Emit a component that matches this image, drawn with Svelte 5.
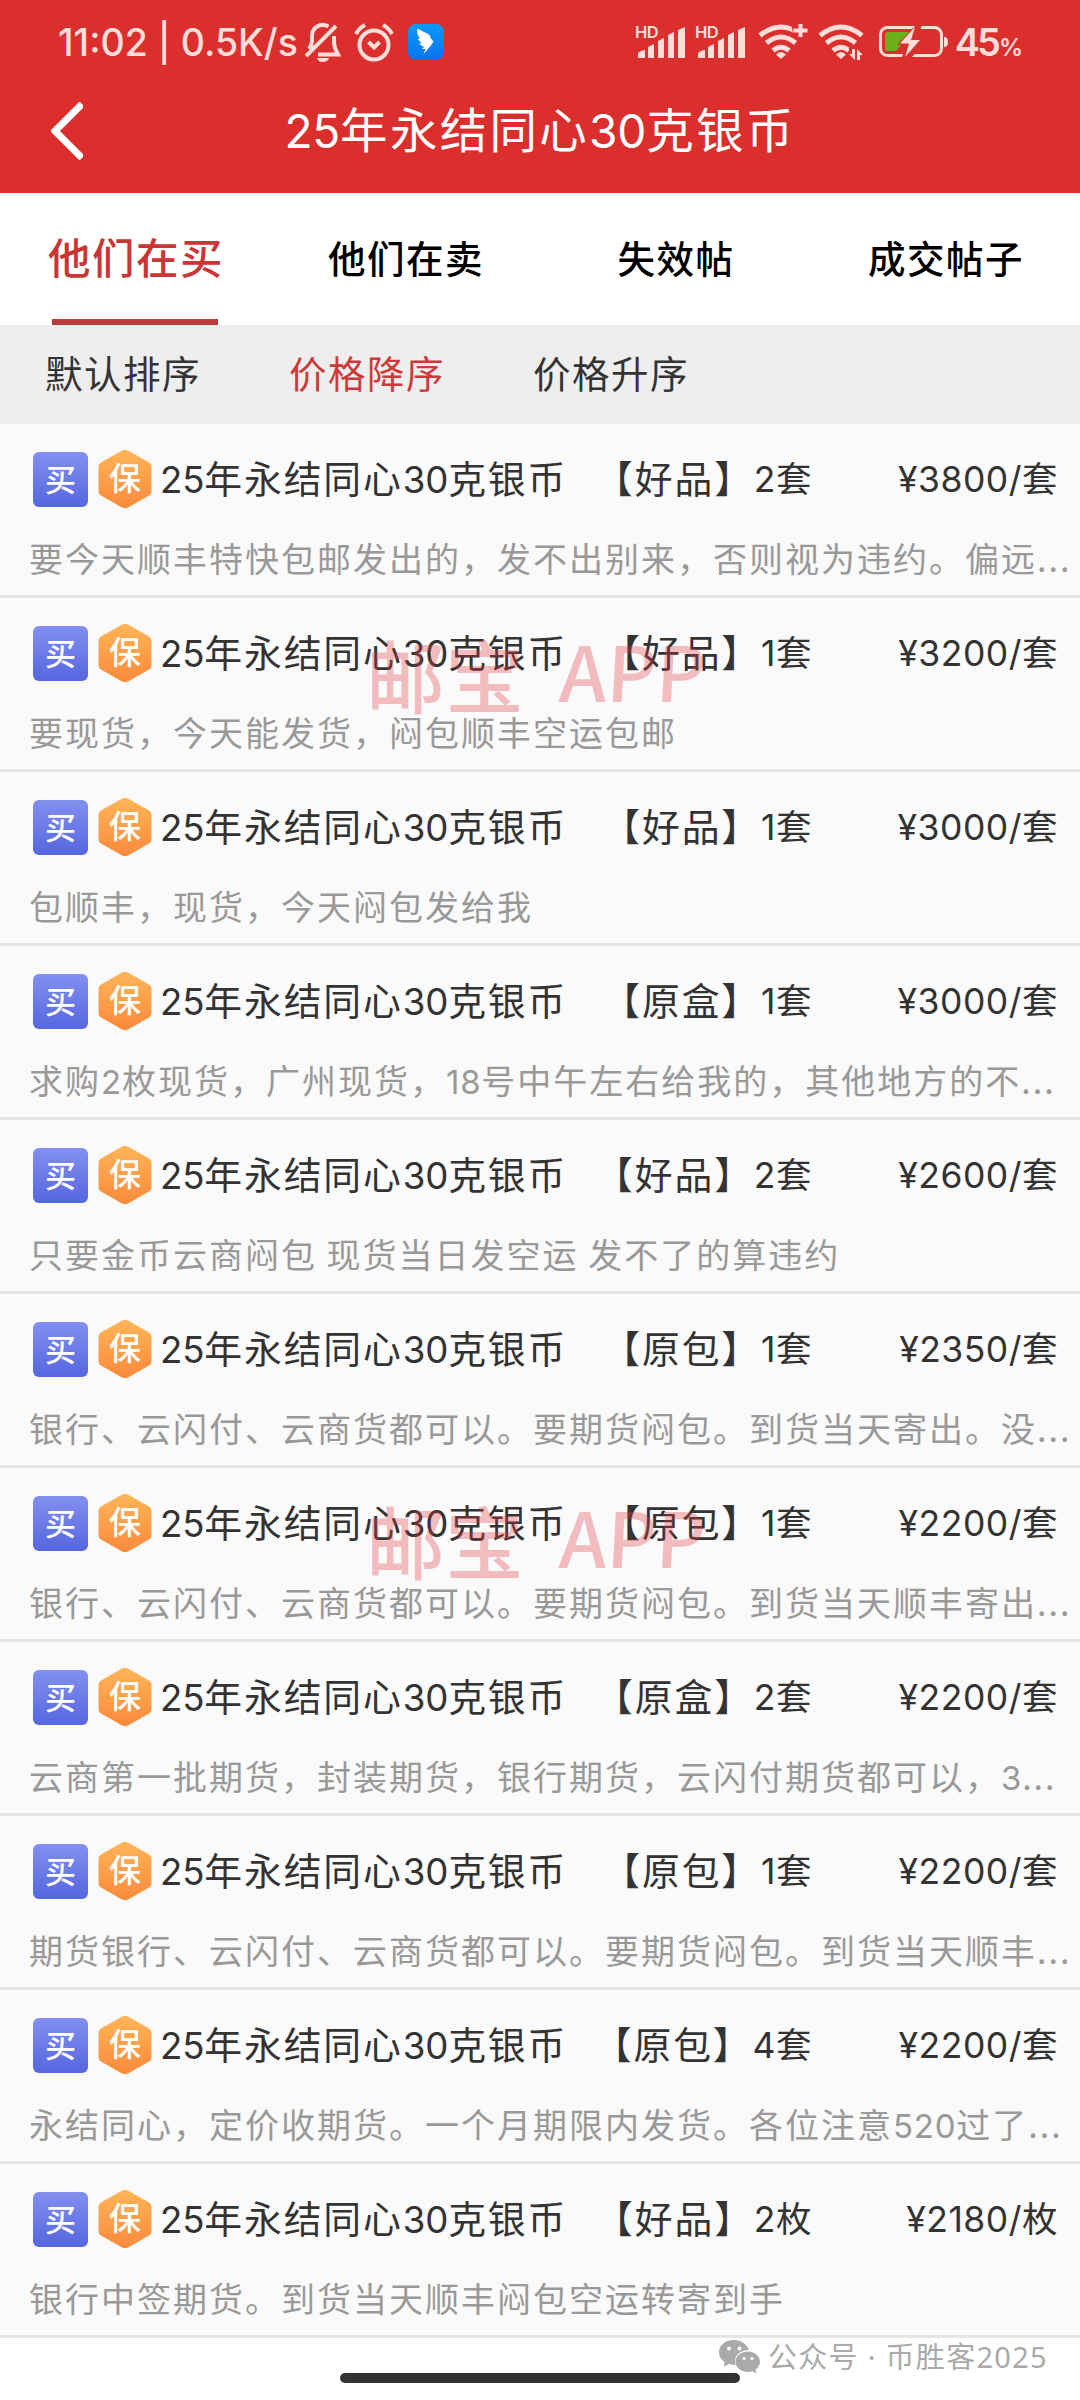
<script lang="ts">
	interface Listing {
		tag: string;
		count: string;
		price: string;
		note: string;
	}

	const title = '25年永结同心30克银币';
	const tabs = ['他们在买', '他们在卖', '失效帖', '成交帖子'];
	const sorts = ['默认排序', '价格降序', '价格升序'];

	let activeTab = $state(0);
	let activeSort = $state(1);

	const listings: Listing[] = [
		{ tag: '好品', count: '2套', price: '3800/套', note: '要今天顺丰特快包邮发出的，发不出别来，否则视为违约。偏远...' },
		{ tag: '好品', count: '1套', price: '3200/套', note: '要现货，今天能发货，闷包顺丰空运包邮' },
		{ tag: '好品', count: '1套', price: '3000/套', note: '包顺丰，现货，今天闷包发给我' },
		{ tag: '原盒', count: '1套', price: '3000/套', note: '求购2枚现货，广州现货，18号中午左右给我的，其他地方的不...' },
		{ tag: '好品', count: '2套', price: '2600/套', note: '只要金币云商闷包 现货当日发空运 发不了的算违约' },
		{ tag: '原包', count: '1套', price: '2350/套', note: '银行、云闪付、云商货都可以。要期货闷包。到货当天寄出。没...' },
		{ tag: '原包', count: '1套', price: '2200/套', note: '银行、云闪付、云商货都可以。要期货闷包。到货当天顺丰寄出...' },
		{ tag: '原盒', count: '2套', price: '2200/套', note: '云商第一批期货，封装期货，银行期货，云闪付期货都可以，3...' },
		{ tag: '原包', count: '1套', price: '2200/套', note: '期货银行、云闪付、云商货都可以。要期货闷包。到货当天顺丰...' },
		{ tag: '原包', count: '4套', price: '2200/套', note: '永结同心，定价收期货。一个月期限内发货。各位注意520过了...' },
		{ tag: '好品', count: '2枚', price: '2180/枚', note: '银行中签期货。到货当天顺丰闷包空运转寄到手' }
	];

	/** Split text into runs of digits and everything else. */
	function runs(text: string): string[] {
		return text.split(/(\d+)/).filter(Boolean);
	}
</script>

{#snippet mixed(text: string)}
	{#each runs(text) as run}<span class:num={/^\d/.test(run)}>{run}</span>{/each}
{/snippet}

{#snippet signal()}
	<svg class="signal" width="52" height="38" viewBox="0 0 52 38">
		<text x="0" y="15" class="hd">HD</text>
		<path d="M3 35v-5q3-3 7-3v8zM13 35V24l6-3v14zM23 35V18l6-3v20zM33 35V12l6-3v26zM43 35V7l7-3v31z" />
	</svg>
{/snippet}

{#snippet waves()}
	<g fill="none" stroke="currentColor" stroke-width="5">
		<path d="M2 12.500Q23-4.500 44 12.500" />
		<path d="M8.500 20Q23 8 37.500 20" />
		<path d="M15 27.500Q23 21 31 27.500" />
	</g>
	<path d="M23 36l-5-4.500q5-5 10 0z" />
{/snippet}

<div class="screen">
	<header>
		<div class="status">
			<span class="clock">11:02 | 0.5K/s</span>
			<svg class="bell" width="36" height="40" viewBox="0 0 36 40" fill="none" stroke="currentColor" stroke-width="4">
				<path d="M1 34 31 4M23.500 4.500C15 0 7 6 7 14v5q0 4-3 8M29 14v6q0 5 4 12.500H13" />
				<path d="M12 36h12q-1 4-6 4t-6-4z" fill="currentColor" stroke="none" />
			</svg>
			<svg class="alarm" width="40" height="40" viewBox="0 0 40 40" fill="none" stroke="currentColor" stroke-width="4">
				<circle cx="20" cy="23" r="14.500" />
				<path d="M2 12Q5 6 11 3M29 3q6 3 9 9M14.500 20l5.500 5.500 5.500-5.500" />
			</svg>
			<svg class="wing" width="36" height="36" viewBox="0 0 36 36">
				<defs>
					<linearGradient id="wing-fill" x1="0" y1="0" x2="0" y2="1">
						<stop offset="0" stop-color="#0b9af8" />
						<stop offset="1" stop-color="#0a74ee" />
					</linearGradient>
				</defs>
				<rect width="36" height="36" rx="8" fill="url(#wing-fill)" />
				<path d="M9.500 4.500 19 9.500q4 2 3.500 4.500l3 3.500-3 4.500-7 8 2-5H14l2-2-5-3 2.500-1-4-4 2.500-.5q-4-5-2.500-10z" fill="#fff" />
			</svg>
			<div class="right">
				{@render signal()}
				{@render signal()}
				<svg class="wifi" width="51" height="38" viewBox="0 0 51 38">
					{@render waves()}
					<path class="cut" d="M33 0h18v15H36z" />
					<path d="M40.500 1h4v4.500h5v4h-5V14h-4V9.500h-5v-4h5z" />
				</svg>
				<svg class="wifi second" width="48" height="38" viewBox="0 0 48 38">
					{@render waves()}
					<path class="cut" d="M31 25h16v13H31z" />
					<path d="M37 26v11l-6-6h3v-5zM39 37V26l6 6h-3v5z" />
				</svg>
				<svg class="battery" width="70" height="34" viewBox="0 0 70 34">
					<rect x="1.500" y="2.500" width="61" height="28" rx="7" fill="none" stroke="currentColor" stroke-width="3" />
					<path d="M9 7h24L17 26H9q-3 0-3-3V10q0-3 3-3z" fill="#6bb01c" />
					<path d="M37 0 18 20h10l-6 14h9l19-20H38l5-14z" class="cut" />
					<path d="M36 2 21 18.500h9L26 32l15-17h-9z" />
					<path d="M65 12q4 0 4 5t-4 5z" />
				</svg>
				<span class="level">45<small>%</small></span>
			</div>
		</div>
		<div class="nav">
			<button class="back" type="button" aria-label="返回">
				<svg width="32" height="58" viewBox="0 0 32 58" fill="none" stroke="currentColor" stroke-width="7">
					<path d="M31 2 4 29l27 27" />
				</svg>
			</button>
			<h1>{@render mixed(title)}</h1>
		</div>
	</header>

	<nav class="tabs">
		{#each tabs as tab, i}
			<button type="button" class:active={activeTab === i} onclick={() => (activeTab = i)}>{tab}</button>
		{/each}
	</nav>

	<div class="sorts">
		{#each sorts as sort, i}
			<button type="button" class:active={activeSort === i} onclick={() => (activeSort = i)}>{sort}</button>
		{/each}
	</div>

	<main>
		{#each listings as item}
			<article>
				<div class="line">
					<span class="buy">买</span>
					<svg class="shield" width="54" height="60" viewBox="0 0 54 60">
						<defs>
							<linearGradient id="shield-fill" x1="0" y1="0" x2="0" y2="1">
								<stop offset="0" stop-color="#ffb558" />
								<stop offset="1" stop-color="#fa8a3c" />
							</linearGradient>
						</defs>
						<path d="M24 1.500q3-1.500 6 0l21 12q2.500 1.500 2.500 4v25q0 2.500-2.500 4l-21 12q-3 1.500-6 0l-21-12q-2.500-1.500-2.500-4v-25q0-2.500 2.500-4z" fill="url(#shield-fill)" />
						<text x="27" y="41" text-anchor="middle">保</text>
					</svg>
					<span class="name">{@render mixed(title)}</span>
					<span class="amount">【{item.tag}】<i>{item.count}</i></span>
					<span class="price">¥{item.price}</span>
				</div>
				<p>{@render mixed(item.note)}</p>
			</article>
		{/each}
	</main>

	<div class="watermark">邮宝<span>APP</span></div>
	<div class="watermark lower">邮宝<span>APP</span></div>

	<footer>
		<div class="account">
			<svg width="41" height="34" viewBox="0 0 41 34">
				<path d="M15 0C6 0 0 5.500 0 12.500c0 4 2 7 5.500 9.500L5 26.500l5-2.500q3 1 6.500 1C14 16 21 10 30 10 28 4 22 0 15 0z" />
				<path d="M29 11.500c-7 0-12.500 4.500-12.500 10.200S22 32 29 32q2.500 0 4.500-.7l4 2.200-1-3.700c2.500-2 4.500-4.800 4.500-8 0-5.800-5.500-10.300-12-10.300z" />
				<g fill="#fff"><circle cx="10" cy="8.500" r="1.900" /><circle cx="20.500" cy="8.500" r="1.900" /><circle cx="25" cy="18.500" r="1.600" /><circle cx="33" cy="18.500" r="1.600" /></g>
			</svg>
			<span>公众号 · 币胜客2025</span>
		</div>
		<div class="home"></div>
	</footer>
</div>

<style>
	:global(body) {
		margin: 0;
	}

	.screen {
		position: relative;
		width: 1080px;
		height: 2400px;
		overflow: hidden;
		background: #fff;
		font-family: 'Noto Sans CJK SC', sans-serif;
		color: #333;
	}

	svg {
		flex: none;
		fill: currentColor;
	}

	svg[fill='none'] {
		fill: none;
	}

	button {
		border: 0;
		padding: 0;
		background: none;
		font: inherit;
		letter-spacing: inherit;
		color: inherit;
	}

	/* Digits are set rounder and tighter than the Chinese text */
	.num {
		font-family: Inter, sans-serif;
		font-size: 0.97em;
		letter-spacing: -0.2px;
	}

	header {
		height: 193px;
		background: #db2f2e;
		color: #fff;
	}

	.status {
		display: flex;
		align-items: center;
		height: 70px;
		padding: 14px 60px 0 58px;
		box-sizing: border-box;
		color: #ffdeda;
		font-family: Inter, sans-serif;
		font-weight: 500;
	}

	.clock {
		width: 240px;
		font-size: 37.500px;
		white-space: nowrap;
	}

	.bell {
		margin-left: 7px;
	}

	.alarm {
		margin-left: 13px;
	}

	.wing {
		margin-left: 14px;
	}

	.right {
		display: flex;
		align-items: center;
		margin-left: auto;
	}

	.signal {
		margin-right: 8px;
	}

	.hd {
		font: 600 16.500px Inter, sans-serif;
		letter-spacing: -0.5px;
	}

	.wifi {
		margin-left: 3px;
	}

	.wifi.second {
		margin-left: 9px;
	}

	.battery {
		margin-left: 13px;
	}

	.cut {
		fill: #db2f2e;
	}

	.level {
		margin-left: 6px;
		font-size: 38px;
		font-weight: 600;
		letter-spacing: -3px;
	}

	.level small {
		margin-left: 1px;
		font-size: 24px;
		font-weight: 600;
	}

	.nav {
		display: grid;
		grid-template-columns: 120px 1fr 120px;
		align-items: center;
		height: 123px;
		padding-bottom: 2px;
		box-sizing: border-box;
	}

	.back {
		display: flex;
		padding-left: 51px;
	}

	h1 {
		margin: -3px 0 0;
		text-align: center;
		font-size: 47.500px;
		font-weight: 400;
		line-height: 1;
		letter-spacing: 2.300px;
	}

	.tabs {
		display: grid;
		grid-template-columns: repeat(4, 1fr);
		height: 132px;
		font-size: 37.500px;
		font-weight: 500;
		letter-spacing: 1.500px;
		color: #000;
	}

	.tabs button {
		justify-self: center;
		height: 132px;
		padding-left: 2px;
		border-bottom: 6px solid transparent;
	}

	.tabs .active {
		width: 166px;
		display: flex;
		align-items: center;
		justify-content: center;
		padding-bottom: 2px;
		box-sizing: border-box;
		white-space: nowrap;
		border-color: #bd3a3b;
		font-size: 42.500px;
		color: #c93635;
	}

	.sorts {
		display: flex;
		gap: 88px;
		height: 99px;
		padding: 0 0 6px 45px;
		box-sizing: border-box;
		background: #eee;
		font-size: 37.500px;
		letter-spacing: 1.500px;
	}

	.sorts .active {
		color: #cd3a3a;
	}

	article {
		height: 174px;
		padding: 25px 22px 0 29px;
		box-sizing: border-box;
		border-bottom: 3px solid #e5e5e5;
		background: #fafafa;
	}

	.line {
		display: flex;
		align-items: center;
		height: 60px;
		font-size: 37.800px;
		line-height: 56px;
		letter-spacing: 1.900px;
		white-space: nowrap;
	}

	.buy {
		width: 55px;
		height: 55px;
		margin: 0 10px 0 4px;
		border-radius: 6px;
		background: linear-gradient(#8390f0, #5566e0);
		color: #fff;
		font-size: 31px;
		font-weight: 500;
		line-height: 51px;
		letter-spacing: 0;
		text-align: center;
	}

	.shield text {
		fill: #fff;
		font-size: 32px;
		font-weight: 500;
		letter-spacing: 0;
	}

	.name,
	.amount,
	.price {
		height: 60px;
	}

	.name {
		width: 411px;
		margin-left: 8px;
	}

	.amount {
		display: flex;
		justify-content: flex-end;
		width: 241px;
	}

	.amount i,
	.price {
		font-family: Inter, 'Noto Sans CJK SC', sans-serif;
		font-style: normal;
		font-size: 35.500px;
		line-height: 61px;
		letter-spacing: 0.5px;
	}

	.price {
		margin-left: auto;
	}

	p {
		margin: 19px 0 0;
		font-size: 34px;
		line-height: 60px;
		letter-spacing: 2px;
		white-space: nowrap;
		color: #999;
	}

	p .num,
	p :global(.num) {
		letter-spacing: 0.8px;
	}

	.watermark {
		position: absolute;
		top: 631px;
		left: 366px;
		display: flex;
		align-items: center;
		height: 84px;
		font-size: 79px;
		font-weight: 500;
		color: rgba(226, 60, 66, 0.32);
		pointer-events: none;
	}

	.watermark span {
		margin: -8px 0 0 36px;
		font-size: 76px;
		transform: skewX(-3deg);
	}

	.watermark.lower {
		top: 1497px;
	}

	footer {
		display: flex;
		flex-direction: column;
		align-items: center;
		height: 62px;
	}

	.account {
		display: flex;
		align-items: center;
		align-self: flex-end;
		gap: 8px;
		height: 35px;
		padding: 2px 32px 0 0;
		box-sizing: border-box;
		font-family: 'Noto Sans', 'Noto Sans CJK SC', sans-serif;
		font-size: 29px;
		line-height: 35px;
		letter-spacing: 1.300px;
		color: #aaa;
	}

	.home {
		width: 400px;
		height: 10px;
		border-radius: 5px;
		background: #333;
	}
</style>
